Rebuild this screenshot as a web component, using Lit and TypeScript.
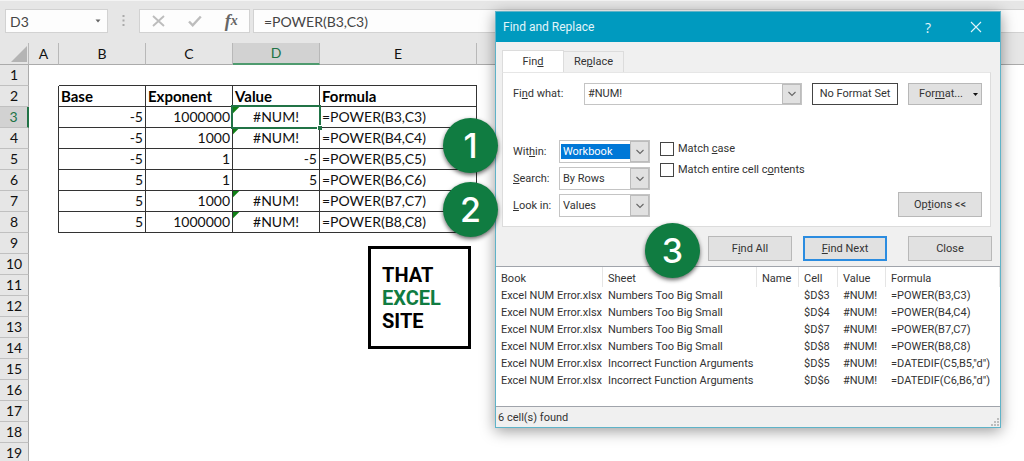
import { LitElement, html, css, svg, nothing } from "lit";
import { customElement, property } from "lit/decorators.js";
import { classMap } from "lit/directives/class-map.js";

const COLUMNS = ["A", "B", "C", "D", "E", "F"];
const ROW_COUNT = 19;

interface DataRow {
  base: string;
  exponent: string;
  value: string;
  formula: string;
}

const DATA: DataRow[] = [
  { base: "-5", exponent: "1000000", value: "#NUM!", formula: "=POWER(B3,C3)" },
  { base: "-5", exponent: "1000", value: "#NUM!", formula: "=POWER(B4,C4)" },
  { base: "-5", exponent: "1", value: "-5", formula: "=POWER(B5,C5)" },
  { base: "5", exponent: "1", value: "5", formula: "=POWER(B6,C6)" },
  { base: "5", exponent: "1000", value: "#NUM!", formula: "=POWER(B7,C7)" },
  { base: "5", exponent: "1000000", value: "#NUM!", formula: "=POWER(B8,C8)" },
];

const BOOK = "Excel NUM Error.xlsx";
const RESULTS = [
  [BOOK, "Numbers Too Big Small", "", "$D$3", "#NUM!", "=POWER(B3,C3)"],
  [BOOK, "Numbers Too Big Small", "", "$D$4", "#NUM!", "=POWER(B4,C4)"],
  [BOOK, "Numbers Too Big Small", "", "$D$7", "#NUM!", "=POWER(B7,C7)"],
  [BOOK, "Numbers Too Big Small", "", "$D$8", "#NUM!", "=POWER(B8,C8)"],
  [BOOK, "Incorrect Function Arguments", "", "$D$5", "#NUM!", '=DATEDIF(C5,B5,"d")'],
  [BOOK, "Incorrect Function Arguments", "", "$D$6", "#NUM!", '=DATEDIF(C6,B6,"d")'],
];

const chevron = svg`<svg viewBox="0 0 10 6" width="10" height="6" aria-hidden="true">
  <path d="M1.5 1 L5 4.5 L8.5 1" fill="none" stroke="#666" stroke-width="1.1" />
</svg>`;

@customElement("formula-bar")
export class FormulaBar extends LitElement {
  static styles = css`
    :host {
      display: flex;
      align-items: stretch;
      height: 24px;
      padding: 8px 0 10px 5px;
      border-top: 1px solid #f4f4f4;
      background: #e6e6e6;
      font: 14px Lato, "Liberation Sans", sans-serif;
      color: #444;
    }
    .box {
      display: flex;
      align-items: center;
      box-sizing: border-box;
      background: #fdfdfd;
      border: 1px solid #d2d2d2;
    }
    .name {
      width: 103px;
      padding-right: 6px;
    }
    .grip {
      display: flex;
      justify-content: center;
      align-items: center;
      width: 31px;
    }
    .tools {
      width: 111px;
      justify-content: space-around;
      padding: 0 0 0 1px;
    }
    .formula {
      flex: 1;
      margin-left: 3px;
      border-right: 0;
    }
    input {
      flex: 1;
      min-width: 0;
      border: 0;
      padding: 0 0 0 4px;
      background: none;
      font: inherit;
      color: inherit;
      outline: none;
    }
    .formula input {
      padding-left: 10px;
    }
    button {
      display: flex;
      align-items: center;
      justify-content: center;
      border: 0;
      padding: 0;
      background: none;
      color: #666;
    }
    .fx {
      font: italic 700 18px/20px "Liberation Serif", serif;
    }
    .fx small {
      font-size: 14px;
    }
  `;

  render() {
    return html`
      <div class="box name">
        <input aria-label="Name box" value="D3" />
        <button aria-label="Show names">
          <svg width="6" height="4" viewBox="0 0 6 4"><path d="M0.5 0.5h5L3 3.5z" fill="#666" /></svg>
        </button>
      </div>
      <div class="grip">
        <svg width="3" height="12" viewBox="0 0 3 12">
          <path d="M0.5 0h2v2h-2zM0.5 4.500h2v2h-2zM0.5 9h2v2h-2z" fill="#aaa" />
        </svg>
      </div>
      <div class="box tools">
        <button aria-label="Cancel">
          <svg width="13" height="12" viewBox="0 0 13 12">
            <path d="M1 1L12 11M12 1L1 11" stroke="#bdbdbd" stroke-width="1.9" fill="none" />
          </svg>
        </button>
        <button aria-label="Enter">
          <svg width="14" height="12" viewBox="0 0 14 12">
            <path d="M1 6.500L4.700 10.300L12.800 1.500" stroke="#bdbdbd" stroke-width="2.400" fill="none" />
          </svg>
        </button>
        <button class="fx" aria-label="Insert function">f<small>x</small></button>
      </div>
      <div class="box formula">
        <input aria-label="Formula" value="=POWER(B3,C3)" />
      </div>
    `;
  }
}

@customElement("work-sheet")
export class WorkSheet extends LitElement {
  static styles = css`
    :host {
      display: block;
      font: 14px/20px Lato, "Liberation Sans", sans-serif;
      color: #111;
    }
    table {
      width: 100%;
      table-layout: fixed;
      border-collapse: separate;
      border-spacing: 0;
    }
    .c-row { width: 29px; }
    .c-a { width: 30px; }
    .c-num { width: 87px; }
    .c-e { width: 157px; }
    th, td {
      box-sizing: border-box;
      height: 21px;
      padding: 0 2px;
      white-space: nowrap;
      font-weight: 400;
    }
    thead th {
      background: #e6e6e6;
      border-right: 1px solid #b8b8b8;
      border-bottom: 1px solid #ababab;
    }
    thead th:last-child {
      border-right: 0;
    }
    thead th.active {
      background: #d2d2d2;
      color: #217346;
      border-bottom: 2px solid #4f9b6f;
    }
    .corner svg {
      display: block;
      margin-left: 9px;
    }
    tbody th {
      background: #e6e6e6;
      border-right: 1px solid #ababab;
      border-bottom: 1px solid #c0c0c0;
    }
    tbody th.active {
      background: #d2d2d2;
      color: #217346;
      border-right: 2px solid #217346;
    }
    .edge-right {
      border-right: 1px solid #333;
    }
    .edge-bottom {
      border-bottom: 1px solid #333;
    }
    .title {
      font-weight: 700;
      font-size: 15px;
      color: #000;
    }
    .number {
      text-align: right;
    }
    .error {
      text-align: center;
      background: linear-gradient(135deg, #0f8015 0 4px, transparent 5px) no-repeat 0 0 / 7px 7px;
    }
    .selected {
      position: relative;
    }
    .selection {
      position: absolute;
      inset: -2px -2px -2px -2px;
      border: 2px solid #217346;
      pointer-events: none;
    }
    .selection::after {
      content: "";
      position: absolute;
      right: -3px;
      bottom: -3px;
      width: 4px;
      height: 4px;
      background: #217346;
      border: 1px solid #fff;
      border-width: 1px 0 0 1px;
    }
  `;

  private cells(row: number) {
    if (row === 1) {
      return html`<td></td>${[0, 1, 2, 3].map(() => html`<td class="edge-bottom"></td>`)}<td></td>`;
    }
    if (row === 2) {
      return html`<td class="edge-right"></td>
        ${["Base", "Exponent", "Value", "Formula"].map(
          (t) => html`<td class="title edge-right edge-bottom">${t}</td>`
        )}<td></td>`;
    }
    const data = DATA[row - 3];
    if (!data) return COLUMNS.map(() => html`<td></td>`);
    const error = data.value.startsWith("#");
    return html`<td class="edge-right"></td>
      <td class="number edge-right edge-bottom">${data.base}</td>
      <td class="number edge-right edge-bottom">${data.exponent}</td>
      <td class=${classMap({ "edge-right": true, "edge-bottom": true, error, number: !error, selected: row === 3 })}>
        ${data.value}${row === 3 ? html`<span class="selection"></span>` : nothing}
      </td>
      <td class="edge-right edge-bottom">${data.formula}</td>
      <td></td>`;
  }

  render() {
    return html`
      <table>
        <colgroup>
          <col class="c-row" /><col class="c-a" /><col class="c-num" /><col class="c-num" />
          <col class="c-num" /><col class="c-e" /><col />
        </colgroup>
        <thead>
          <tr>
            <th class="corner">
              <svg width="16" height="16" viewBox="0 0 16 16" aria-hidden="true">
                <path d="M16 0V16H0z" fill="#b4b4b4" />
              </svg>
            </th>
            ${COLUMNS.map((c) => html`<th class=${classMap({ active: c === "D" })}>${c === "F" ? nothing : c}</th>`)}
          </tr>
        </thead>
        <tbody>
          ${Array.from({ length: ROW_COUNT }, (_, i) => i + 1).map(
            (row) => html`<tr><th class=${classMap({ active: row === 3 })}>${row}</th>${this.cells(row)}</tr>`
          )}
        </tbody>
      </table>
    `;
  }
}

@customElement("find-dialog")
export class FindDialog extends LitElement {
  static styles = css`
    :host {
      display: block;
      box-sizing: border-box;
      border: 1px solid #5fb3c8;
      background: #f0f0f0;
      box-shadow: 0 3px 14px rgba(0, 0, 0, 0.4);
      font: 11px/16px Roboto, "Noto Sans", sans-serif;
      color: #333;
    }
    button, input, select {
      font: inherit;
      color: inherit;
    }
    u {
      text-underline-offset: 1px;
    }
    .titlebar {
      display: flex;
      align-items: center;
      height: 30px;
      padding: 0 16px 0 7px;
      background: #009abf;
      color: #e2f5fa;
    }
    .titlebar h1 {
      flex: 1;
      margin: 0;
      font-size: 12px;
      font-weight: 400;
    }
    .titlebar button {
      display: flex;
      justify-content: center;
      width: 16px;
      padding: 0;
      border: 0;
      background: none;
      font: 14px "Open Sans", sans-serif;
    }
    .titlebar .close {
      margin-left: 32px;
    }
    .tabs {
      display: flex;
      align-items: flex-end;
      padding: 8px 6px 0;
    }
    .tab {
      box-sizing: border-box;
      width: 60px;
      height: 21px;
      padding: 0;
      border: 1px solid #dcdcdc;
      border-width: 1px 1px 0 0;
      background: #f0f0f0;
    }
    .tab.current {
      width: 62px;
      height: 22px;
      border-left-width: 1px;
      background: #fff;
    }
    .panel {
      margin: 0 9px 0 6px;
      padding: 10px 8px 9px 10px;
      border: 1px solid #dcdcdc;
      border-top-color: #e6e6e6;
      background: #fff;
    }
    .query {
      display: grid;
      grid-template-columns: 61px 1fr 86px 74px;
      gap: 10px;
      align-items: stretch;
      height: 22px;
    }
    .query label, .choices label {
      align-self: center;
    }
    .combo {
      display: grid;
      grid-template-columns: 1fr 19px;
      box-sizing: border-box;
      border: 1px solid #c4c4c4;
      background: #fff;
    }
    .combo input, .combo select {
      grid-area: 1 / 1 / 2 / 2;
      min-width: 0;
      padding: 0 3px;
      border: 0;
      background: none;
      outline: none;
      appearance: none;
      border-radius: 0;
    }
    .combo select {
      grid-area: 1 / 1 / 2 / 3;
    }
    .combo .focused {
      background: linear-gradient(#0078d7, #0078d7) no-repeat 1px 3px / 70px 15px;
      color: #fff;
    }
    .arrow {
      grid-area: 1 / 2 / 2 / 3;
      display: flex;
      align-items: center;
      justify-content: center;
      padding: 0;
      border: 1px solid #bcbcbc;
      background: #e1e1e1;
      pointer-events: none;
    }
    .preview {
      display: flex;
      align-items: center;
      justify-content: center;
      border: 1px solid #444;
      background: #fff;
    }
    .push {
      box-sizing: border-box;
      width: 84px;
      height: 25px;
      padding: 0;
      border: 1px solid #b8b8b8;
      background: #e1e1e1;
    }
    .push.default {
      border: 2px solid #2b8ce0;
    }
    .push.format {
      display: flex;
      align-items: center;
      justify-content: flex-end;
      gap: 10px;
      width: 74px;
      height: 22px;
      padding-right: 3px;
    }
    .choices {
      display: flex;
      gap: 10px;
      margin-top: 35px;
    }
    .settings {
      display: grid;
      grid-template-columns: 46px 91px;
      grid-auto-rows: 23px;
      row-gap: 4px;
    }
    .checks {
      display: flex;
      flex: 1;
      flex-direction: column;
      gap: 4px;
    }
    .checks label {
      display: flex;
      align-items: center;
      align-self: flex-start;
      gap: 4px;
      height: 17px;
    }
    .checks input {
      appearance: none;
      box-sizing: border-box;
      width: 14px;
      height: 14px;
      margin: 0;
      border: 1px solid #444;
      background: #fff;
    }
    .choices .push {
      align-self: flex-end;
    }
    .actions {
      display: flex;
      justify-content: flex-end;
      gap: 11px;
      padding: 9px 8px 5px;
    }
    .actions .last {
      margin-left: 10px;
    }
    .results {
      height: 139px;
      border: 1px solid #a0a4ab;
      border-width: 1px 0;
      background: #fff;
    }
    table {
      width: 100%;
      table-layout: fixed;
      border-spacing: 0;
    }
    .w-book { width: 107px; }
    .w-sheet { width: 154px; }
    .w-name { width: 42px; }
    .w-cell { width: 39px; }
    .w-value { width: 48px; }
    th, td {
      box-sizing: border-box;
      height: 17px;
      padding: 0 0 0 5px;
      text-align: left;
      font-weight: 400;
      line-height: 17px;
      white-space: nowrap;
    }
    th {
      height: 20px;
      padding-top: 2px;
      border-right: 1px solid #e5e5e5;
    }
    .status {
      display: flex;
      align-items: flex-end;
      justify-content: space-between;
      height: 20px;
      padding-left: 2px;
    }
    .status span {
      line-height: 18px;
    }
    .status svg {
      margin: 0 1px 1px 0;
    }
  `;

  private choice(id: string, label: unknown, value: string, focused = false) {
    return html`
      <label for=${id}>${label}</label>
      <div class="combo">
        <select id=${id} class=${classMap({ focused })}>
          <option>${value}</option>
        </select>
        <span class="arrow">${chevron}</span>
      </div>
    `;
  }

  render() {
    return html`
      <header class="titlebar">
        <h1>Find and Replace</h1>
        <button aria-label="Help">?</button>
        <button class="close" aria-label="Close window">
          <svg width="12" height="12" viewBox="0 0 12 12">
            <path d="M1 1L11 11M11 1L1 11" stroke="#e2f5fa" stroke-width="1.1" />
          </svg>
        </button>
      </header>
      <div class="tabs" role="tablist">
        <button class="tab current" role="tab" aria-selected="true">Fin<u>d</u></button>
        <button class="tab" role="tab" aria-selected="false">Re<u>p</u>lace</button>
      </div>
      <section class="panel">
        <div class="query">
          <label for="what">Fi<u>n</u>d what:</label>
          <div class="combo">
            <input id="what" value="#NUM!" />
            <button class="arrow" aria-label="Recent searches">${chevron}</button>
          </div>
          <div class="preview">No Format Set</div>
          <button class="push format">
            <span>For<u>m</u>at...</span>
            <svg width="5" height="3" viewBox="0 0 5 3"><path d="M0 0h5L2.500 3z" fill="#111" /></svg>
          </button>
        </div>
        <div class="choices">
          <div class="settings">
            ${this.choice("within", html`Wit<u>h</u>in:`, "Workbook", true)}
            ${this.choice("search", html`<u>S</u>earch:`, "By Rows")}
            ${this.choice("look", html`<u>L</u>ook in:`, "Values")}
          </div>
          <div class="checks">
            <label><input type="checkbox" /><span>Match <u>c</u>ase</span></label>
            <label><input type="checkbox" /><span>Match entire cell c<u>o</u>ntents</span></label>
          </div>
          <button class="push">Op<u>t</u>ions &lt;&lt;</button>
        </div>
      </section>
      <div class="actions">
        <button class="push">F<u>i</u>nd All</button>
        <button class="push default"><u>F</u>ind Next</button>
        <button class="push last">Close</button>
      </div>
      <div class="results">
        <table>
          <colgroup>
            <col class="w-book" /><col class="w-sheet" /><col class="w-name" />
            <col class="w-cell" /><col class="w-value" /><col />
          </colgroup>
          <thead>
            <tr>${["Book", "Sheet", "Name", "Cell", "Value", "Formula"].map((h) => html`<th>${h}</th>`)}</tr>
          </thead>
          <tbody>
            ${RESULTS.map((r) => html`<tr>${r.map((c) => html`<td>${c}</td>`)}</tr>`)}
          </tbody>
        </table>
      </div>
      <footer class="status">
        <span>6 cell(s) found</span>
        <svg width="8" height="8" viewBox="0 0 8 8" aria-hidden="true">
          <path d="M6 0h2v2H6zM3 3h2v2H3zM6 3h2v2H6zM0 6h2v2H0zM3 6h2v2H3zM6 6h2v2H6z" fill="#bdbdbd" />
        </svg>
      </footer>
    `;
  }
}

@customElement("step-badge")
export class StepBadge extends LitElement {
  @property() label = "";

  static styles = css`
    :host {
      display: flex;
      align-items: center;
      justify-content: center;
      width: 55px;
      height: 55px;
      border-radius: 50%;
      background: #107c41;
      box-shadow: 0 2px 4px rgba(0, 0, 0, 0.6);
      color: #fff;
      font: 500 34px/1 Inter, "Liberation Sans", sans-serif;
    }
  `;

  render() {
    return html`<span>${this.label}</span>`;
  }
}

@customElement("app-root")
export class AppRoot extends LitElement {
  static styles = css`
    :host {
      display: block;
      position: relative;
      height: 100vh;
      overflow: hidden;
      background: #fff;
    }
    .logo {
      position: absolute;
      left: 368px;
      top: 246px;
      box-sizing: border-box;
      width: 103px;
      height: 103px;
      padding: 15px 0 0 11px;
      border: 3px solid #000;
      background: #fff;
      color: #000;
      font: 700 20px/23px Roboto, "Liberation Sans", sans-serif;
    }
    .logo div:nth-child(2) {
      color: #107c41;
    }
    .dialog {
      position: absolute;
      left: 495px;
      top: 11px;
      width: 506px;
    }
    .badge {
      position: absolute;
    }
    .one {
      left: 443px;
      top: 118px;
    }
    .two {
      left: 443px;
      top: 182px;
    }
    .three {
      left: 645px;
      top: 223px;
    }
  `;

  render() {
    return html`
      <formula-bar></formula-bar>
      <work-sheet></work-sheet>
      <div class="logo"><div>THAT</div><div>EXCEL</div><div>SITE</div></div>
      <find-dialog class="dialog" role="dialog" aria-label="Find and Replace"></find-dialog>
      <step-badge class="badge one" label="1"></step-badge>
      <step-badge class="badge two" label="2"></step-badge>
      <step-badge class="badge three" label="3"></step-badge>
    `;
  }
}
